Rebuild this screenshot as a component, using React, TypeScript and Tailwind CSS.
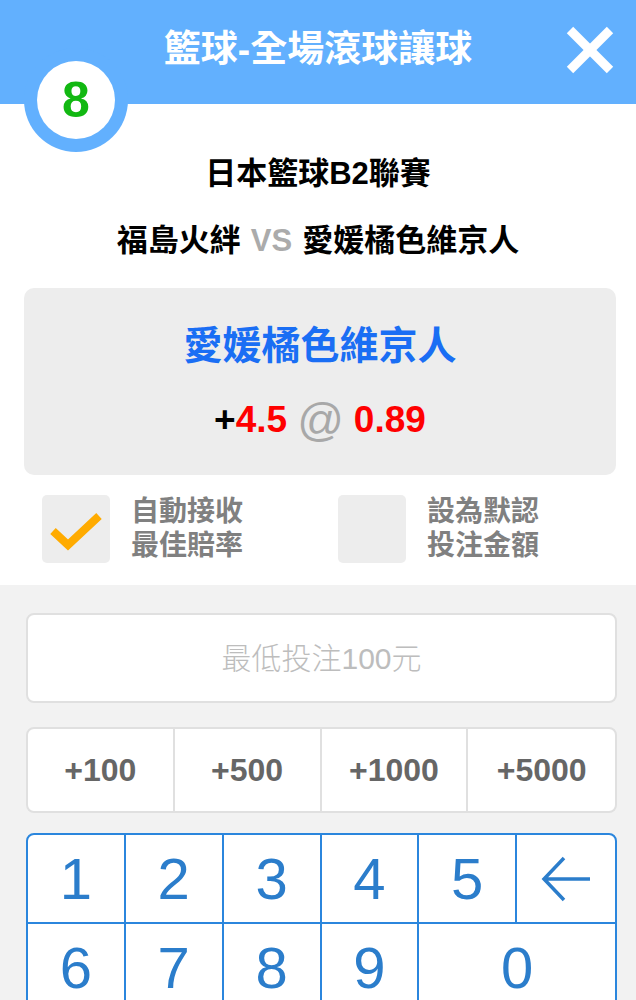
import React from "react";

const FONT = {fontFamily: '"Liberation Sans", "Noto Sans CJK TC", sans-serif'};

const CloseIcon = () => (
    <svg width="48" height="48" viewBox="0 0 48 48">
        <line x1="4" y1="4" x2="44" y2="44" stroke="white" strokeWidth="9" />
        <line x1="44" y1="4" x2="4" y2="44" stroke="white" strokeWidth="9" />
    </svg>
);

const BackIcon = () => (
    <svg width="50" height="46" viewBox="0 0 50 46" fill="none">
        <path d="M49 23H3M23 2L3 23l20 21" stroke="#2b7dcb" strokeWidth="3.5" />
    </svg>
);

const CheckBox = ({checked, lines}: { checked: boolean; lines: string[] }) => (
    <div className="flex items-center w-[296px] pl-[18px]">
        <div className="w-[68px] h-[68px] rounded-[5px] bg-[#ededed] shrink-0">
            {checked && (
                <svg width="68" height="68" viewBox="0 0 68 68" fill="none">
                    <polyline points="11,36 26,50 57,21" stroke="#ffab00" strokeWidth="8" />
                </svg>
            )}
        </div>
        <div className="ml-[21px] text-[28px] leading-[34px] font-bold text-[#808080]">
            {lines.map((l) => (
                <div key={l}>{l}</div>
            ))}
        </div>
    </div>
);

export default function App() {
    const amounts = ["+100", "+500", "+1000", "+5000"];
    const keys = ["1", "2", "3", "4", "5", "back", "6", "7", "8", "9", "0"];

    return (
        <div className="w-[636px] h-[1000px] overflow-hidden bg-white" style={FONT}>
            {/* Header */}
            <div className="relative h-[104px] bg-[#62b0fe] flex items-center justify-center">
                <h1 className="text-[37px] leading-[44px] font-bold text-white pb-[4px]">籃球-全場滾球讓球</h1>
                <button className="absolute right-[22px] top-[26px]">
                    <CloseIcon />
                </button>
                <div className="absolute left-[24px] top-[48px] w-[104px] h-[104px] rounded-full bg-[#62b0fe] flex items-center justify-center">
                    <div className="w-[78px] h-[78px] rounded-full bg-white flex items-center justify-center">
                        <span className="text-[50px] leading-none font-bold text-[#12b812]">8</span>
                    </div>
                </div>
            </div>

            {/* Match info */}
            <div className="flex flex-col items-center">
                <div className="mt-[50px] text-[31px] leading-[40px] font-bold text-black">日本籃球B2聯賽</div>
                <div className="mt-[27px] text-[31px] leading-[40px] font-bold text-black">
                    福島火絆<span className="text-[#ababab] mx-[10px]">VS</span>愛媛橘色維京人
                </div>
            </div>

            {/* Selection card */}
            <div className="mt-[27px] ml-[24px] w-[592px] h-[187px] rounded-[10px] bg-[#ededed] flex flex-col items-center">
                <div className="mt-[34px] text-[39px] leading-[48px] font-bold text-[#1a6ef4]">愛媛橘色維京人</div>
                <div className="mt-[26px] h-[48px] flex items-center font-bold text-[37px]">
                    <span className="text-black">+</span>
                    <span className="text-[#ff0000]">4.5</span>
                    <span className="mx-[10px] text-[46px] font-normal text-[#a8a8a8]">@</span>
                    <span className="text-[#ff0000]">0.89</span>
                </div>
            </div>

            {/* Options */}
            <div className="flex ml-[24px] mt-[20px] pb-[22px]">
                <CheckBox checked lines={["自動接收", "最佳賠率"]} />
                <CheckBox checked={false} lines={["設為默認", "投注金額"]} />
            </div>

            {/* Bet input area */}
            <div className="bg-[#f2f2f2] pt-[28px] pb-[40px]">
                <div className="ml-[26px] w-[591px] h-[90px] rounded-[8px] border-2 border-[#e0e0e0] bg-white flex items-center justify-center">
                    <span className="text-[30px] font-light text-[#bdbdbd]">最低投注100元</span>
                </div>

                <div className="ml-[26px] mt-[24px] w-[591px] h-[86px] rounded-[8px] border-2 border-[#e0e0e0] bg-white grid grid-cols-4">
                    {amounts.map((a, i) => (
                        <button
                            key={a}
                            className={`flex items-center justify-center text-[32px] font-bold text-[#666] ${i < 3 ? "border-r-2 border-[#e0e0e0]" : ""}`}
                        >
                            {a}
                        </button>
                    ))}
                </div>

                <div className="ml-[26px] mt-[20px] w-[591px] rounded-[8px] border-2 border-[#2b86dd] bg-white grid grid-cols-6 overflow-hidden">
                    {keys.map((k, i) => (
                        <button
                            key={k}
                            className={`h-[89px] flex items-center justify-center text-[58px] text-[#2b7dcb] border-[#2b86dd] border-b-2 ${
                                k === "0" ? "col-span-2" : ""
                            } ${i === 5 || k === "0" ? "" : "border-r-2"}`}
                        >
                            {k === "back" ? <BackIcon /> : k}
                        </button>
                    ))}
                </div>
            </div>
        </div>
    );
}
